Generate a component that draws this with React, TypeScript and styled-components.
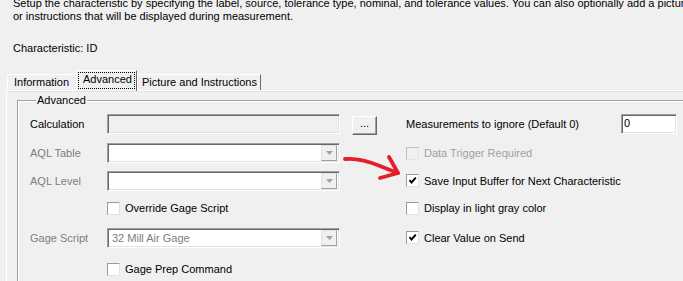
import React, { ReactElement } from "react";
import styled, { createGlobalStyle } from "styled-components";

const GlobalStyle = createGlobalStyle`
  html, body {
    margin: 0;
    padding: 0;
    background: #f0f0f0;
    overflow: hidden;
  }
  body {
    font-family: "Liberation Sans", Arial, sans-serif;
    font-size: 11px;
    color: #000;
  }
`;

function Checkbox({
  checked,
  disabled,
}: {
  checked?: boolean;
  disabled?: boolean;
}): ReactElement {
  return (
    <Box $disabled={disabled}>
      {checked && (
        <svg width="9" height="9" viewBox="0 0 9 9">
          <path
            d="M1.5 4.2 L3.5 6.5 L7.8 1.6"
            fill="none"
            stroke="#000"
            strokeWidth="1.9"
          />
        </svg>
      )}
    </Box>
  );
}

function Combo({ value }: { value?: string }): ReactElement {
  return (
    <ComboBox>
      <ComboText>{value}</ComboText>
      <DropButton>
        <svg width="7" height="4" viewBox="0 0 7 4">
          <path d="M0 0 L7 0 L3.5 4 Z" fill="#a3a3a3" />
        </svg>
      </DropButton>
    </ComboBox>
  );
}

function App(): ReactElement {
  return (
    <Page>
      <GlobalStyle />
      <Intro>
        <IntroLine>
          Setup the characteristic by specifying the label, source, tolerance
          type, nominal, and tolerance values. You can also optionally add a
          picture
        </IntroLine>
        <IntroLine>
          or instructions that will be displayed during measurement.
        </IntroLine>
      </Intro>
      <CharLine>Characteristic: ID</CharLine>

      <TabStrip>
        <Tab $width={69}>Information</Tab>
        <Tab $width={61} $active>
          <Focus>Advanced</Focus>
        </Tab>
        <Tab $width={124} $last>
          Picture and Instructions
        </Tab>
      </TabStrip>

      <TabPanel>
        <Group>
          <Legend>Advanced</Legend>
          <FormGrid>
            <Label>Calculation</Label>
            <TextBox $disabled />
            <EllipsisButton>...</EllipsisButton>
            <Spacer />
            <RightCell>
              <RightLabel>Measurements to ignore (Default 0)</RightLabel>
              <NumberBox>0</NumberBox>
            </RightCell>

            <Label $muted>AQL Table</Label>
            <Combo />
            <Empty />
            <Spacer />
            <CheckRow>
              <Checkbox disabled />
              <CheckText $muted>Data Trigger Required</CheckText>
            </CheckRow>

            <Label $muted>AQL Level</Label>
            <Combo />
            <Empty />
            <Spacer />
            <CheckRow>
              <Checkbox checked />
              <CheckText>Save Input Buffer for Next Characteristic</CheckText>
            </CheckRow>

            <Empty />
            <CheckRow>
              <Checkbox />
              <CheckText>Override Gage Script</CheckText>
            </CheckRow>
            <Empty />
            <Spacer />
            <CheckRow>
              <Checkbox />
              <CheckText>Display in light gray color</CheckText>
            </CheckRow>

            <Label $muted>Gage Script</Label>
            <Combo value="32 Mill Air Gage" />
            <Empty />
            <Spacer />
            <CheckRow>
              <Checkbox checked />
              <CheckText>Clear Value on Send</CheckText>
            </CheckRow>

            <Empty />
            <CheckRow>
              <Checkbox />
              <CheckText>Gage Prep Command</CheckText>
            </CheckRow>
            <Empty />
            <Spacer />
            <Empty />
          </FormGrid>

          {/* red annotation arrow drawn over the form */}
          <Arrow width="70" height="36" viewBox="0 0 70 36">
            <path
              d="M5 7 C 16 6, 28 9, 40 14 C 47 17, 53 19, 58 21"
              fill="none"
              stroke="#e3202a"
              strokeWidth="3.8"
              strokeLinecap="round"
            />
            <path
              d="M49 5 L58 21 L40 26"
              fill="none"
              stroke="#e3202a"
              strokeWidth="3.8"
              strokeLinecap="round"
              strokeLinejoin="round"
            />
          </Arrow>
        </Group>
      </TabPanel>
    </Page>
  );
}

const Page = styled.div`
  width: 683px;
  height: 281px;
  overflow: hidden;
  display: flex;
  flex-direction: column;
`;

const Intro = styled.div`
  margin-top: -3px;
  padding-left: 13px;
  line-height: 13px;
`;

const IntroLine = styled.div`
  white-space: nowrap;
`;

const CharLine = styled.div`
  margin-top: 19px;
  padding-left: 13px;
  line-height: 13px;
`;

const TabStrip = styled.div`
  display: flex;
  align-items: flex-end;
  margin-top: 15px;
  padding-left: 7px;
  height: 20px;
  position: relative;
  z-index: 1;
`;

const Tab = styled.div<{ $width: number; $active?: boolean; $last?: boolean }>`
  box-sizing: border-box;
  width: ${(p) => p.$width}px;
  height: ${(p) => (p.$active ? 21 : 16)}px;
  margin-bottom: ${(p) => (p.$active ? -1 : 0)}px;
  padding: ${(p) =>
    p.$active ? "1px 1px 0" : p.$last ? "1px 0 0 4px" : "1px 0 0 6px"};
  border-top: 1px solid #fff;
  border-left: 1px solid #fff;
  border-right: 1px solid
    ${(p) => (p.$active || p.$last ? "#696969" : "#f0f0f0")};
  background: #f0f0f0;
  line-height: 13px;
  white-space: nowrap;
`;

const Focus = styled.div`
  border: 1px dotted #000;
  height: 17px;
  box-sizing: border-box;
  padding: 0 0 0 4px;
  line-height: 13px;
`;

const TabPanel = styled.div`
  flex: 1;
  margin-left: 6px;
  border-top: 1px solid #fff;
  border-left: 1px solid #fff;
  box-shadow: inset 0 1px 0 #e3e3e3;
  position: relative;
`;

const Group = styled.fieldset`
  position: relative;
  margin: 3px 0 0 10px;
  padding: 0 0 0 12px;
  width: 700px;
  height: 240px;
  border: 1px solid #a0a0a0;
  box-shadow: inset 1px 1px 0 #fff, 1px 1px 0 #fff;
  min-width: 0;
`;

const Legend = styled.legend`
  margin-left: 6px;
  padding: 0 1px;
  line-height: 13px;
`;

const FormGrid = styled.div`
  display: grid;
  grid-template-columns: 77px 233px 37px 29px 1fr;
  grid-template-rows: 30px 28px 27px 28px 31px 32px;
  align-items: center;
  margin-top: 2px;
`;

const Label = styled.div<{ $muted?: boolean }>`
  color: ${(p) => (p.$muted ? "#7d7d7d" : "#000")};
  white-space: nowrap;
`;

const Empty = styled.div``;
const Spacer = styled.div``;

const TextBox = styled.div<{ $disabled?: boolean }>`
  box-sizing: border-box;
  height: 20px;
  background: ${(p) => (p.$disabled ? "#f0f0f0" : "#fff")};
  border-top: 1px solid #a0a0a0;
  border-left: 1px solid #a0a0a0;
  border-right: 1px solid #fff;
  border-bottom: 1px solid #fff;
  box-shadow: inset 1px 1px 0 #696969, inset -1px -1px 0 #e3e3e3;
`;

const ComboBox = styled.div`
  box-sizing: border-box;
  height: 20px;
  display: flex;
  align-items: center;
  background: #fff;
  border-top: 1px solid #a0a0a0;
  border-left: 1px solid #a0a0a0;
  border-right: 1px solid #fff;
  border-bottom: 1px solid #fff;
  box-shadow: inset 1px 1px 0 #696969, inset -1px -1px 0 #e3e3e3;
  padding: 2px 2px 2px 4px;
`;

const ComboText = styled.div`
  flex: 1;
  color: #7d7d7d;
  white-space: nowrap;
`;

const DropButton = styled.div`
  box-sizing: border-box;
  width: 16px;
  height: 16px;
  display: flex;
  align-items: center;
  justify-content: center;
  background: #f0f0f0;
  border-top: 1px solid #e3e3e3;
  border-left: 1px solid #e3e3e3;
  border-right: 1px solid #a0a0a0;
  border-bottom: 1px solid #a0a0a0;
`;

const EllipsisButton = styled.div`
  justify-self: end;
  box-sizing: border-box;
  width: 25px;
  height: 19px;
  margin-top: 2px;
  display: flex;
  align-items: center;
  justify-content: center;
  background: #f0f0f0;
  border-top: 1px solid #fff;
  border-left: 1px solid #fff;
  border-right: 1px solid #696969;
  border-bottom: 1px solid #696969;
  box-shadow: inset -1px -1px 0 #a0a0a0;
  line-height: 11px;
  padding-bottom: 3px;
`;

const RightCell = styled.div`
  display: flex;
  align-items: center;
`;

const RightLabel = styled.div`
  flex: 0 0 215px;
  white-space: nowrap;
`;

const NumberBox = styled.div`
  box-sizing: border-box;
  width: 56px;
  height: 20px;
  padding: 2px 0 0 2px;
  line-height: 13px;
  background: #fff;
  border-top: 1px solid #a0a0a0;
  border-left: 1px solid #a0a0a0;
  border-right: 1px solid #fff;
  border-bottom: 1px solid #fff;
  box-shadow: inset 1px 1px 0 #696969, inset -1px -1px 0 #e3e3e3;
`;

const CheckRow = styled.div`
  display: flex;
  align-items: center;
  gap: 5px;
`;

const Box = styled.div<{ $disabled?: boolean }>`
  box-sizing: border-box;
  width: 13px;
  height: 13px;
  display: flex;
  align-items: center;
  justify-content: center;
  background: ${(p) => (p.$disabled ? "#f0f0f0" : "#fff")};
  border: 1px solid ${(p) => (p.$disabled ? "#c0c0c0" : "#9a9a9a")};
  border-right-color: #e3e3e3;
  border-bottom-color: #e3e3e3;
`;

const CheckText = styled.div<{ $muted?: boolean }>`
  color: ${(p) => (p.$muted ? "#a0a0a0" : "#000")};
  white-space: nowrap;
`;

const Arrow = styled.svg`
  position: absolute;
  left: 322px;
  top: 45px;
  pointer-events: none;
`;

export default App;
